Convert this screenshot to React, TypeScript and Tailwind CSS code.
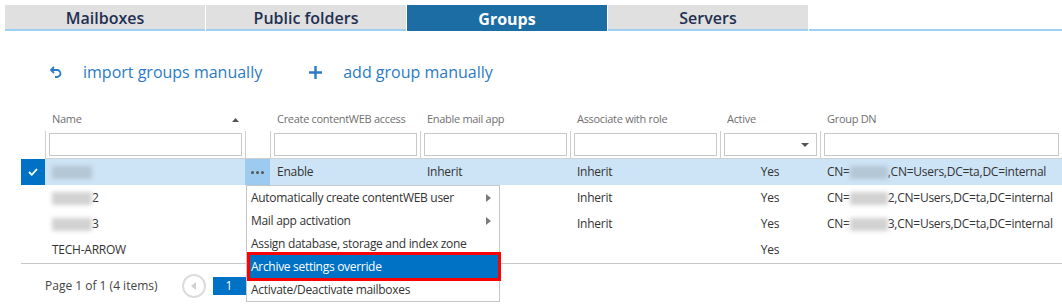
import React from "react";

const cols = "grid grid-cols-[21px_24px_200px_25px_150px_150px_150px_100px_242px]";

function Blur({ sel, w }: { sel?: boolean; w: string }) {
  return (
    <span
      className={`inline-block h-[13px] align-middle blur-[2px] ${w} ${
        sel ? "bg-[#b3c6d6]" : "bg-[#d2d2d2]"
      }`}
    />
  );
}

function Arrow() {
  return (
    <svg width="5" height="8" viewBox="0 0 5 8" className="ml-auto mr-[8px]">
      <path d="M0 0 L5 4 L0 8 Z" fill="#7a7a7a" />
    </svg>
  );
}

type Row = {
  sel?: boolean;
  name: React.ReactNode;
  create?: string;
  mail?: string;
  role?: string;
  active: string;
  dn?: React.ReactNode;
};

export default function App() {
  const rows: Row[] = [
    {
      sel: true,
      name: <Blur sel w="w-[40px]" />,
      create: "Enable",
      mail: "Inherit",
      role: "Inherit",
      active: "Yes",
      dn: (
        <>
          CN=
          <Blur sel w="w-[38px]" />
          ,CN=Users,DC=ta,DC=internal
        </>
      ),
    },
    {
      name: (
        <>
          <Blur w="w-[40px]" />2
        </>
      ),
      mail: "",
      role: "Inherit",
      active: "Yes",
      dn: (
        <>
          CN=
          <Blur w="w-[38px]" />
          2,CN=Users,DC=ta,DC=internal
        </>
      ),
    },
    {
      name: (
        <>
          <Blur w="w-[40px]" />3
        </>
      ),
      role: "Inherit",
      active: "Yes",
      dn: (
        <>
          CN=
          <Blur w="w-[38px]" />
          3,CN=Users,DC=ta,DC=internal
        </>
      ),
    },
    { name: "TECH-ARROW", active: "Yes" },
  ];

  const tabs = ["Mailboxes", "Public folders", "Groups", "Servers"];

  return (
    <div className="relative w-[1062px] h-[308px] overflow-hidden bg-white font-['Open_Sans',sans-serif] text-[#333]">
      {/* Tabs */}
      <div className="flex pt-[5px] pl-[5px] h-[31px]">
        {tabs.map((t) =>
          t === "Groups" ? (
            <div
              key={t}
              className="w-[200px] mr-px h-[26px] bg-[#1d6da5] text-white font-bold text-[16px] flex items-center justify-center pt-[2px]"
            >
              {t}
            </div>
          ) : (
            <div
              key={t}
              className="w-[200px] mr-px h-[26px] bg-[#e0e0e0] border-b-2 border-[#9ed0f2] text-[#1f3050] font-semibold text-[16px] flex items-center justify-center pt-[2px]"
            >
              {t}
            </div>
          )
        )}
        <div className="flex-1 h-[26px] border-b-2 border-[#9ed0f2]" />
      </div>

      {/* Action links */}
      <div className="flex items-center h-[24px] mt-[29px] pl-[50px] text-[#2b7bc4] text-[16px]">
        <svg width="12" height="13" viewBox="0 0 12 13" className="mr-[21px]">
          <path d="M4 1 L1 4 L4 7" fill="none" stroke="#2b7bc4" strokeWidth="1.8" />
          <path
            d="M1.5 4 H7 A3.5 3.5 0 0 1 7 11 H5"
            fill="none"
            stroke="#2b7bc4"
            strokeWidth="1.8"
          />
        </svg>
        <span>import groups manually</span>
        <svg width="13" height="13" viewBox="0 0 13 13" className="ml-[47px] mr-[21px]">
          <path d="M6.5 0 V13 M0 6.5 H13" stroke="#2b7bc4" strokeWidth="2.4" />
        </svg>
        <span>add group manually</span>
      </div>

      {/* Header */}
      <div className={`${cols} h-[23px] mt-[24px] text-[11px] tracking-[-0.3px] text-[#707070] items-center`}>
        <div />
        <div />
        <div className="pl-[7px] flex items-center">
          Name
          <svg width="7" height="4" viewBox="0 0 7 4" className="ml-auto mr-[6px]">
            <path d="M0 4 L3.5 0 L7 4 Z" fill="#555" />
          </svg>
        </div>
        <div />
        <div className="pl-[7px]">Create contentWEB access</div>
        <div className="pl-[7px]">Enable mail app</div>
        <div className="pl-[7px]">Associate with role</div>
        <div className="pl-[7px]">Active</div>
        <div className="pl-[7px]">Group DN</div>
      </div>

      {/* Filter row */}
      <div className={`${cols} h-[28px]`}>
        <div />
        <div />
        {[0, 1, 2, 3, 4, 5, 6].map((i) => (
          <div
            key={i}
            className="border-l border-b border-[#cfcfcf] px-[3px] pt-[2px]"
          >
            {i === 1 ? null : (
              <div className="relative h-[23px] border border-[#c8c8c8] bg-white">
                {i === 5 && (
                  <svg
                    width="8"
                    height="4"
                    viewBox="0 0 8 4"
                    className="absolute right-[7px] top-[9px]"
                  >
                    <path d="M0 0 L8 0 L4 4 Z" fill="#555" />
                  </svg>
                )}
              </div>
            )}
          </div>
        ))}
      </div>

      {/* Rows */}
      <div className="ml-[21px] border-b border-[#c8c8c8]">
        {rows.map((r, idx) => (
          <div
            key={idx}
            className={`grid grid-cols-[24px_200px_25px_150px_150px_150px_100px_242px] h-[26px] items-center text-[12px] tracking-[-0.25px] ${
              r.sel ? "bg-[#cde4f6]" : "bg-white"
            }`}
          >
            <div className={`h-full flex items-center justify-center ${r.sel ? "bg-[#0072c6]" : ""}`}>
              {r.sel && (
                <svg width="10" height="8" viewBox="0 0 10 8">
                  <path d="M1 4 L3.8 6.8 L9 1" fill="none" stroke="white" strokeWidth="1.8" />
                </svg>
              )}
            </div>
            <div className="pl-[7px] whitespace-nowrap">{r.name}</div>
            <div
              className={`h-full flex items-center justify-center gap-[2px] ${
                r.sel ? "bg-[#9ccbef]" : ""
              }`}
            >
              {r.sel && (
                <>
                  <span className="w-[3px] h-[3px] rounded-full bg-[#555]" />
                  <span className="w-[3px] h-[3px] rounded-full bg-[#555]" />
                  <span className="w-[3px] h-[3px] rounded-full bg-[#555]" />
                </>
              )}
            </div>
            <div className="pl-[7px]">{r.create}</div>
            <div className="pl-[7px]">{r.mail}</div>
            <div className="pl-[7px]">{r.role}</div>
            <div className="text-center">{r.active}</div>
            <div className="pl-[7px] whitespace-nowrap">{r.dn}</div>
          </div>
        ))}
      </div>

      {/* Pagination */}
      <div className="flex items-center h-[24px] mt-[10px] pl-[45px] text-[12px] text-[#444]">
        <span>Page 1 of 1 (4 items)</span>
        <div className="ml-[24px] w-[24px] h-[24px] rounded-full border-2 border-[#dcdcdc] flex items-center justify-center">
          <svg width="5" height="8" viewBox="0 0 5 8" className="mr-[1px]">
            <path d="M5 0 L0 4 L5 8 Z" fill="#cfcfcf" />
          </svg>
        </div>
        <div className="ml-[7px] w-[33px] h-[18px] bg-[#0072c6] text-white flex items-center justify-center">
          1
        </div>
      </div>

      {/* Context menu */}
      <div className="absolute left-[246px] top-[185px] w-[254px] border border-[#c6c6c6] bg-white text-[12px] tracking-[-0.3px] text-[#333]">
        <div className="h-[23px] flex items-center pl-[4px]">
          Automatically create contentWEB user
          <Arrow />
        </div>
        <div className="h-[23px] flex items-center pl-[4px]">
          Mail app activation
          <Arrow />
        </div>
        <div className="h-[23px] flex items-center pl-[4px]">
          Assign database, storage and index zone
        </div>
        <div className="h-[23px] flex items-center pl-[4px] relative">
          <div className="absolute left-[3px] right-[1px] top-0 bottom-0 bg-[#0072c6] outline-[3px] outline-[#ff0000]" />
          <span className="relative text-white">Archive settings override</span>
        </div>
        <div className="h-[23px] flex items-center pl-[4px]">
          Activate/Deactivate mailboxes
        </div>
      </div>
    </div>
  );
}
